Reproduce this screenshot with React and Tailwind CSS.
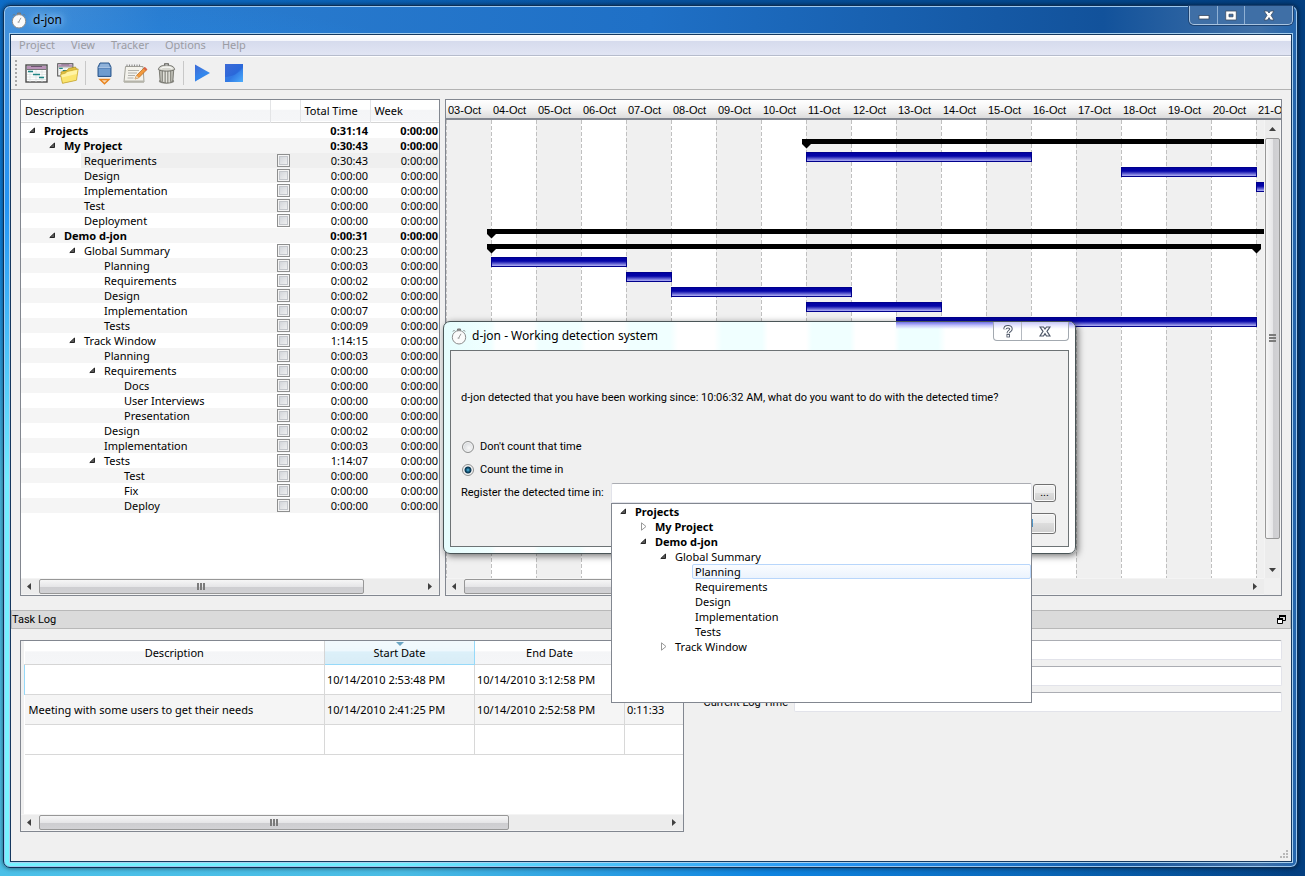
import React from "react";

const TASKS = [
  { name: "Projects", level: 0, open: true, bold: true, total: "0:31:14" },
  { name: "My Project", level: 1, open: true, bold: true, total: "0:30:43" },
  { name: "Requeriments", level: 2, check: true, total: "0:30:43", hover: true },
  { name: "Design", level: 2, check: true, total: "0:00:00" },
  { name: "Implementation", level: 2, check: true, total: "0:00:00" },
  { name: "Test", level: 2, check: true, total: "0:00:00" },
  { name: "Deployment", level: 2, check: true, total: "0:00:00" },
  { name: "Demo d-jon", level: 1, open: true, bold: true, total: "0:00:31" },
  { name: "Global Summary", level: 2, open: true, check: true, total: "0:00:23" },
  { name: "Planning", level: 3, check: true, total: "0:00:03" },
  { name: "Requirements", level: 3, check: true, total: "0:00:02" },
  { name: "Design", level: 3, check: true, total: "0:00:02" },
  { name: "Implementation", level: 3, check: true, total: "0:00:07" },
  { name: "Tests", level: 3, check: true, total: "0:00:09" },
  { name: "Track Window", level: 2, open: true, check: true, total: "1:14:15" },
  { name: "Planning", level: 3, check: true, total: "0:00:03" },
  { name: "Requirements", level: 3, open: true, check: true, total: "0:00:00" },
  { name: "Docs", level: 4, check: true, total: "0:00:00" },
  { name: "User Interviews", level: 4, check: true, total: "0:00:00" },
  { name: "Presentation", level: 4, check: true, total: "0:00:00" },
  { name: "Design", level: 3, check: true, total: "0:00:02" },
  { name: "Implementation", level: 3, check: true, total: "0:00:03" },
  { name: "Tests", level: 3, open: true, check: true, total: "1:14:07" },
  { name: "Test", level: 4, check: true, total: "0:00:00" },
  { name: "Fix", level: 4, check: true, total: "0:00:00" },
  { name: "Deploy", level: 4, check: true, total: "0:00:00" },
];

const PICKER = [
  { name: "Projects", level: 0, state: "open", bold: true },
  { name: "My Project", level: 1, state: "closed", bold: true },
  { name: "Demo d-jon", level: 1, state: "open", bold: true },
  { name: "Global Summary", level: 2, state: "open" },
  { name: "Planning", level: 3, selected: true },
  { name: "Requirements", level: 3 },
  { name: "Design", level: 3 },
  { name: "Implementation", level: 3 },
  { name: "Tests", level: 3 },
  { name: "Track Window", level: 2, state: "closed" },
];

const INDENT = ["pl-[8px]", "pl-[28px]", "pl-[48px]", "pl-[68px]", "pl-[88px]"];

const DAYS = Array.from({ length: 19 }, (_, i) => `${String(i + 3).padStart(2, "0")}-Oct`);
const DAY = 45;

/* row = line in the task tree, start = days after 03-Oct */
const BARS = [
  { row: 2, start: 8, days: 5 },
  { row: 3, start: 15, days: 3 },
  { row: 4, start: 18, days: 3 },
  { row: 9, start: 1, days: 3 },
  { row: 10, start: 4, days: 1 },
  { row: 11, start: 5, days: 4 },
  { row: 12, start: 8, days: 3 },
  { row: 13, start: 10, days: 8 },
];
const SUMMARIES = [
  { row: 1, start: 8, days: 14 },
  { row: 7, start: 1, days: 22 },
  { row: 8, start: 1, days: 17 },
];

const HEAD = "bg-[linear-gradient(#ffffff_0%,#ffffff_45%,#f4f5f7_46%,#f5f6f8_100%)]";

function Expander({ state }) {
  if (!state) return <span className="w-[15px] shrink-0" />;
  return (
    <button type="button" aria-label={state === "open" ? "Collapse" : "Expand"} className="flex h-[15px] w-[15px] shrink-0 items-center">
      <svg width="8" height="9" viewBox="0 0 8 9" aria-hidden="true">
        {state === "open" ? (
          <path d="M5.5 2v4.5H.8z" fill="#595959" stroke="#262626" strokeWidth="1" />
        ) : (
          <path d="M1.5.8v7.4L6 4.5z" fill="#fff" stroke="#989898" strokeWidth="1" />
        )}
      </svg>
    </button>
  );
}

function ArrowGlyph({ dir }) {
  const d = { left: "M6 1v7L2 4.500z", right: "M3 1v7l4-3.500z", up: "M1 6h7L4.500 2z", down: "M1 3h7L4.500 7z" }[dir];
  return (
    <svg width="9" height="9" viewBox="0 0 9 9" aria-hidden="true">
      <path d={d} fill="#404040" />
    </svg>
  );
}

function HScroll({ thumb }) {
  return (
    <div className="flex h-[17px] shrink-0 border-t border-b border-[#f4f4f4] bg-[#ececec]">
      <button type="button" aria-label="Scroll left" className="flex w-[18px] items-center pl-[4px]">
        <ArrowGlyph dir="left" />
      </button>
      <div className="flex flex-1">
        <div className={`${thumb} flex items-center justify-center gap-px rounded-[2px] border border-[#979797] bg-[linear-gradient(#f6f6f6_0%,#e6e6e8_50%,#cdcdd0_51%,#d2d2d5_100%)]`}>
          <span className="h-[7px] w-[2px] bg-[#7b7b7b]" />
          <span className="h-[7px] w-[2px] bg-[#7b7b7b]" />
          <span className="h-[7px] w-[2px] bg-[#7b7b7b]" />
        </div>
      </div>
      <button type="button" aria-label="Scroll right" className="flex w-[18px] items-center pl-[4px]">
        <ArrowGlyph dir="right" />
      </button>
    </div>
  );
}

function VScroll() {
  return (
    <div className="flex w-[17px] shrink-0 flex-col border-r border-l border-[#f4f4f4] bg-[#ececec]">
      <button type="button" aria-label="Scroll up" className="flex h-[18px] items-center justify-center">
        <ArrowGlyph dir="up" />
      </button>
      <div className="flex flex-1 flex-col">
        <div className="flex h-[95%] flex-col items-center justify-center gap-px rounded-[2px] border border-[#979797] bg-[linear-gradient(to_right,#f6f6f6_0%,#e6e6e8_50%,#cdcdd0_51%,#d2d2d5_100%)]">
          <span className="h-[2px] w-[7px] bg-[#7b7b7b]" />
          <span className="h-[2px] w-[7px] bg-[#7b7b7b]" />
          <span className="h-[2px] w-[7px] bg-[#7b7b7b]" />
        </div>
      </div>
      <button type="button" aria-label="Scroll down" className="flex h-[18px] items-center justify-center">
        <ArrowGlyph dir="down" />
      </button>
    </div>
  );
}

function Stopwatch() {
  return (
    <svg width="16" height="17" viewBox="0 0 16 17" aria-hidden="true">
      <path d="M6.500 1h3v2h-3zM2 3.500l1.500-1.500M14 3.500l-1.500-1.500" stroke="#777" strokeWidth="1" fill="#888" />
      <circle cx="8" cy="9.300" r="6.700" fill="#fbfbfb" stroke="#8c8c8c" strokeWidth="1" />
      <path d="M7.200 10.800L10 5.800" stroke="#9a9a9a" strokeWidth="1" />
      <circle cx="7.600" cy="10" r="1" fill="#b5b5b5" />
    </svg>
  );
}

function GanttWindow() {
  return (
    <g>
      <rect x="1" y="1" width="21" height="17" fill="#fdfdfd" stroke="#4a4a4a" strokeWidth="1.400" />
      <rect x="2" y="2" width="19" height="3" fill="#b993b8" />
      <path d="M6 2.500h11" stroke="#6e5570" />
      <path d="M2 5.500h19" stroke="#777" />
      <path d="M2 8h19M2 10.500h19M2 13h19M2 15.500h19M5 6v12M11 6v12M17 6v12" stroke="#d9e0e0" strokeWidth=".7" />
      <path d="M3 7.500h5M8 10.500h7M14 13.500h5" stroke="#1f8584" strokeWidth="1.600" />
    </g>
  );
}

function NewProjectIcon() {
  return (
    <svg width="23" height="19" viewBox="0 0 23 19" aria-hidden="true"><GanttWindow /></svg>
  );
}

function OpenProjectIcon() {
  return (
    <svg width="22" height="22" viewBox="0 0 22 22" aria-hidden="true">
      <g transform="translate(0 1) scale(.72)"><GanttWindow /></g>
      <path d="M4 10l6-1.500 1.500-2L18.500 5l.8 1.800 1.200.2-1.500 11-13.500 3z" fill="#e3c340" stroke="#a98a1c" strokeWidth=".7" />
      <path d="M3.500 12.500L8.500 11l1.200-1.500L21.200 7 19.500 18.300 5.500 21.300z" fill="#fbe56f" stroke="#c6a530" strokeWidth=".7" />
      <path d="M4.300 13L9 11.700l1.100-1.400L20.300 8l-.6 4L5 15.600z" fill="#fff3a6" />
    </svg>
  );
}

function DownloadIcon() {
  return (
    <svg width="15" height="23" viewBox="0 0 15 23" aria-hidden="true">
      <path d="M3 1h9l2 4V14.500H1V5z" fill="#5b87bd" stroke="#2f5a8e" strokeWidth="1" />
      <path d="M3.500 1.800h8L12.800 5H2.200z" fill="#8fb2da" />
      <path d="M1.500 5.500h12" stroke="#bcd3ec" strokeWidth=".8" />
      <rect x="2" y="7" width="11" height="6.500" fill="#6f9ccf" />
      <path d="M3 17.500h9L7.500 21.800z" fill="#f8d9b0" stroke="#e8821c" strokeWidth="1.400" />
    </svg>
  );
}

function EditIcon() {
  return (
    <svg width="25" height="21" viewBox="0 0 25 21" aria-hidden="true">
      <path d="M2.500 3.500h17.500l1 15.500h-20z" fill="#f3f2ec" stroke="#a2a198" strokeWidth="1" />
      <path d="M1 17.500h20v2H1z" fill="#b5b4aa" />
      <path d="M4 3.500V1.500M6.500 3.500V1.500M9 3.500V1.500M11.500 3.500V1.500M14 3.500V1.500M16.500 3.500V1.500" stroke="#8d8d8d" strokeWidth="1.100" />
      <path d="M5 7.500h11M5 10h9M5 12.500h7M4.500 15h6" stroke="#b0b0ac" strokeWidth="1" />
      <path d="M12 16l1.500-3.500 8-8 2.300 2.200-8 8z" fill="#f29a3d" stroke="#b8651a" strokeWidth=".7" />
      <path d="M12 16l1.500-3.500 2.300 2.200z" fill="#e9d5b5" />
      <path d="M20.500 5.500l1.500-1.500 2.300 2.200-1.500 1.500z" fill="#d9604a" />
    </svg>
  );
}

function TrashIcon() {
  return (
    <svg width="19" height="23" viewBox="0 0 21 24" aria-hidden="true">
      <ellipse cx="10.500" cy="20.500" rx="8.500" ry="2.700" fill="#8b8b84" />
      <path d="M2.500 8h16l-1 12.500c-3 2.300-11 2.300-14 0z" fill="#b9b9b1" stroke="#73736c" strokeWidth="1" />
      <path d="M6 9v12M9 9.500V22M12 9.500V22M15 9v12" stroke="#8a8a82" strokeWidth="1.100" />
      <path d="M7.400 9v12M10.500 9.500V22M13.500 9.500V22" stroke="#e6e6e0" strokeWidth="1.200" />
      <path d="M1.500 7.500C2 4 6 2.800 10.500 2.800S19 4 19.500 7.500c-3 2.500-15 2.500-18 0z" fill="#d9d9d2" stroke="#66665f" strokeWidth="1" />
      <path d="M4 6.500C6 4.500 14 4.500 17 6.500" stroke="#f8f8f5" strokeWidth="1.200" fill="none" />
      <path d="M8.500 3V1.300h4V3" stroke="#5c5c56" strokeWidth="1.200" fill="#ccc" />
    </svg>
  );
}

function PlayIcon() {
  return (
    <svg width="17" height="18" viewBox="0 0 17 18" aria-hidden="true">
      <defs><linearGradient id="play" x1="0" y1="0" x2="1" y2="1"><stop offset="0" stopColor="#3a6ad8" /><stop offset="1" stopColor="#3c9cf5" /></linearGradient></defs>
      <path d="M1 .5v17L16 9z" fill="url(#play)" />
      <path d="M1 17.500V12c4-3 9-4 14-3.500z" fill="#2f86ee" opacity=".6" />
    </svg>
  );
}

function StopIcon() {
  return (
    <svg width="18" height="18" viewBox="0 0 18 18" aria-hidden="true">
      <defs><linearGradient id="stop" x1="0" y1="0" x2="1" y2="1"><stop offset="0" stopColor="#3d6ad6" /><stop offset=".55" stopColor="#2a68da" /><stop offset="1" stopColor="#55b8ff" /></linearGradient></defs>
      <rect width="18" height="18" x="0" y="0" fill="url(#stop)" />
      <path d="M0 18V13C7 13 14 9 18 4v14z" fill="#3f9bf7" opacity=".35" />
    </svg>
  );
}

function ToolButton({ label, children, className }) {
  return (
    <button type="button" aria-label={label} className={`flex h-[26px] items-center justify-center ${className}`}>
      {children}
    </button>
  );
}

function TitleBar() {
  return (
    <header className="flex h-[28px] items-start justify-between">
      <div className="flex h-[28px] items-center gap-[6px] pl-px">
        <Stopwatch />
        <h1 className="text-[12px] leading-[16px] text-black [text-shadow:0_0_6px_#9fd0ff,0_0_10px_#9fd0ff,0_0_14px_#9fd0ff]">d-jon</h1>
      </div>
      <div className="flex h-[19px] overflow-hidden rounded-b-[5px] border border-t-0 border-[#a9c4e0] bg-[#3f6fa6] shadow-[0_0_0_1px_#1d4372]">
        <button type="button" aria-label="Minimize" className="flex w-[28px] items-center justify-center border-r border-[#8fb0d4]">
          <svg width="12" height="12" viewBox="0 0 12 12" aria-hidden="true"><rect x="1" y="6.500" width="10" height="3.500" fill="#fff" stroke="#3b4b62" strokeWidth=".8" /></svg>
        </button>
        <button type="button" aria-label="Maximize" className="flex w-[27px] items-center justify-center border-r border-[#8fb0d4]">
          <svg width="12" height="11" viewBox="0 0 12 11" aria-hidden="true"><path fillRule="evenodd" d="M.7 1h10.600v9H.7zM4 4.200v2.600h4V4.200z" fill="#fff" stroke="#3b4b62" strokeWidth=".8" /></svg>
        </button>
        <button type="button" aria-label="Close" className="flex w-[47px] items-center justify-center">
          <svg width="12" height="11" viewBox="0 0 12 11" aria-hidden="true"><path d="M1 1h3.500L6 3l1.500-2H11L8 5.300 11 10H7.500L6 7.600 4.500 10H1l3-4.700z" fill="#fff" stroke="#3b4b62" strokeWidth=".8" /></svg>
        </button>
      </div>
    </header>
  );
}

function TaskTree() {
  return (
    <section className="flex w-[420px] shrink-0 flex-col border border-[#828790] bg-white">
      <div className="flex-1">
        <table className="w-full table-fixed border-collapse text-[11px] leading-[15px]">
          <colgroup><col /><col className="w-[30px]" /><col className="w-[70px]" /><col className="w-[69px]" /></colgroup>
          <thead>
            <tr className={`h-[22px] border-b border-[#d5d5d5] text-left ${HEAD}`}>
              <th className="border-r border-[#e3e4e6] p-0 pl-[4px] font-normal">Description</th>
              <th aria-label="Done" className="border-r border-[#e3e4e6] p-0" />
              <th className="border-r border-[#e3e4e6] p-0 pl-[4px] font-normal">Total Time</th>
              <th className="p-0 pl-[4px] font-normal">Week</th>
            </tr>
            <tr aria-hidden="true" className="h-px"><td colSpan="4" className="p-0" /></tr>
          </thead>
          <tbody>
            {TASKS.map((t, i) => (
              <tr key={i} className={`h-[15px] ${t.hover ? "bg-[linear-gradient(to_right,#fff_60px,#efefef_60px)]" : i % 2 ? "bg-[#f5f5f5]" : ""} ${t.bold ? "font-bold" : ""}`}>
                <td className="p-0">
                  <div className={`flex h-[15px] items-center whitespace-nowrap ${INDENT[t.level]}`}>
                    <Expander state={t.open ? "open" : null} />
                    <span>{t.name}</span>
                  </div>
                </td>
                <td className="p-0">
                  <div className="flex h-[15px] items-center justify-center pr-[4px]">
                    {t.check && (
                      <input type="checkbox" aria-label={t.name} className="h-[13px] w-[13px] appearance-none border border-[#8e8f8f] bg-[linear-gradient(135deg,#cbcfd5,#f6f6f6)] shadow-[inset_0_0_0_1px_#f4f4f4,inset_0_0_0_2px_#c3c6cb]" />
                    )}
                  </div>
                </td>
                <td className="p-0 pr-[2px] text-right">{t.total}</td>
                <td className="p-0 pr-px text-right">0:00:00</td>
              </tr>
            ))}
          </tbody>
        </table>
      </div>
      <HScroll thumb="w-[85%]" />
    </section>
  );
}

function GanttChart() {
  return (
    <section className="flex min-w-0 flex-1 flex-col border border-[#828790] bg-white">
      <div className="flex h-[20px] shrink-0 overflow-hidden border-b-2 border-[#828790] bg-[linear-gradient(#ffffff,#f4f4f4_50%,#dcdcdc)] font-['Liberation_Sans',Arial,sans-serif] text-[11px] leading-[20px]">
        {DAYS.map((d) => (
          <span key={d} className="w-[45px] shrink-0 whitespace-nowrap pl-[2px]">{d}</span>
        ))}
      </div>
      <div className="flex min-h-0 flex-1">
        <div className="min-w-0 flex-1">
          <svg className="block h-full w-full" aria-label="Gantt chart">
            <defs>
              <linearGradient id="bar" x1="0" y1="0" x2="0" y2="1">
                <stop offset="0" stopColor="#0000a0" />
                <stop offset=".4" stopColor="#0404a8" />
                <stop offset="1" stopColor="#c4c4ff" />
              </linearGradient>
            </defs>
            {DAYS.map((d, i) => (
              <g key={d}>
                {i % 2 === 0 && <rect x={i * DAY} y="0" width={DAY} height="100%" fill="#f0f0f0" />}
                <line x1={i * DAY + 0.5} x2={i * DAY + 0.5} y1="0" y2="100%" stroke="#c0c0c0" strokeDasharray="4 2" />
              </g>
            ))}
            {SUMMARIES.map((s) => {
              const x = s.start * DAY;
              const y = s.row * 15 + 4;
              const end = x + s.days * DAY;
              return (
                <g key={s.row} fill="#000">
                  <rect x={x - 4} y={y} width={s.days * DAY + 9} height="5" />
                  <path d={`M${x - 4} ${y + 4}h9v1l-4.500 4.500l-4.500 -4.500z`} />
                  <path d={`M${end - 4} ${y + 4}h9v1l-4.500 4.500l-4.500 -4.500z`} />
                </g>
              );
            })}
            {BARS.map((b) => (
              <rect key={b.row} x={b.start * DAY + 0.5} y={b.row * 15 + 2.5} width={b.days * DAY} height="9" fill="url(#bar)" stroke="#00008c" />
            ))}
          </svg>
        </div>
        <VScroll />
      </div>
      <div className="flex bg-[#f0f0f0]">
        <div className="min-w-0 flex-1"><HScroll thumb="w-1/2" /></div>
        <div className="w-[17px]" />
      </div>
    </section>
  );
}

const LOG = [
  { text: "", start: "10/14/2010 2:53:48 PM", end: "10/14/2010 3:12:58 PM", time: "0:19:10" },
  { text: "Meeting with some users to get their needs", start: "10/14/2010 2:41:25 PM", end: "10/14/2010 2:52:58 PM", time: "0:11:33" },
  { text: "", start: "", end: "", time: "" },
];

function TaskLog() {
  return (
    <section className="flex h-[192px] w-[664px] shrink-0 flex-col border border-[#828790] bg-white">
      <div className="flex-1 border-l-[3px] border-[#f0f0f0]">
        <table className="w-full table-fixed border-collapse text-[11px] leading-[15px]">
          <colgroup><col className="w-[300px]" /><col className="w-[150px]" /><col className="w-[150px]" /><col /></colgroup>
          <thead>
            <tr className={`h-[23px] ${HEAD}`}>
              <th className="border-r border-b border-[#d5d5d5] p-0 font-normal">Description</th>
              <th className="relative border-r border-b border-[#96d9f9] bg-[linear-gradient(#f2f9fd_0%,#eef8fd_45%,#dcf0f9_46%,#d8ecf6_100%)] p-0 font-normal">
                Start Date
                <svg className="absolute top-[1px] left-1/2 -ml-[4px]" width="8" height="4" viewBox="0 0 8 4" aria-hidden="true"><path d="M0 0h8L4 4z" fill="#6aa5c4" /></svg>
              </th>
              <th className="border-r border-b border-[#d5d5d5] p-0 font-normal">End Date</th>
              <th aria-label="Time" className="border-b border-[#d5d5d5] p-0" />
            </tr>
          </thead>
          <tbody>
            {LOG.map((r, i) => (
              <tr key={i} className={`h-[30px] border-b border-[#d8d8d8] ${i === 1 ? "bg-[#f5f5f5]" : ""}`}>
                <td className={`border-r border-[#d8d8d8] p-0 pl-[4px] ${i === 0 ? "border-l border-l-[#96d9f9]" : ""}`}>{r.text}</td>
                <td className="border-r border-[#d8d8d8] p-0 pl-[2px]">{r.start}</td>
                <td className="border-r border-[#d8d8d8] p-0 pl-[2px]">{r.end}</td>
                <td className="p-0 pl-[2px]">{r.time}</td>
              </tr>
            ))}
          </tbody>
        </table>
      </div>
      <HScroll thumb="w-3/4" />
    </section>
  );
}

const FIELD = "h-[20px] min-w-0 flex-1 rounded-[2px] border border-[#e2e3ea] border-t-[#abadb3] bg-white px-[3px] text-[11px]";

function LogForm() {
  return (
    <form className="flex flex-1 flex-col gap-[6px] font-[Roboto,sans-serif] text-[11px] leading-[20px]">
      <div className="flex pl-[110px]"><input aria-label="Task" className={FIELD} /></div>
      <div className="flex pl-[110px]"><input aria-label="Time" className={FIELD} /></div>
      <div className="flex">
        <label htmlFor="log-time" className="w-[110px] pr-[6px] text-right leading-[21px]">Current Log Time</label>
        <input id="log-time" className={FIELD} />
      </div>
    </form>
  );
}

const RADIO =
  "h-[12px] w-[12px] appearance-none rounded-full border border-[#8e8f8f] bg-[radial-gradient(circle_at_60%_60%,#f8f8f8,#c9cdd2)] shadow-[inset_0_0_0_1px_#f4f4f4] checked:bg-[radial-gradient(circle,#59c1ec_0px,#12506e_2px,#0b3550_3px,#f0f0f0_4px)]";
const PUSH =
  "rounded-[3px] border border-[#707070] bg-[linear-gradient(#f2f2f2_0%,#ebebeb_49%,#dddddd_50%,#cfcfcf_100%)] shadow-[inset_0_0_0_1px_#fafafa]";

function TaskPicker() {
  return (
    <ul className="absolute top-[20px] left-0 z-10 h-[200px] w-full border border-[#828790] bg-white font-['Noto_Sans',sans-serif] text-[11px] leading-[15px]">
      {PICKER.map((p, i) => (
        <li key={i} className={`flex h-[15px] items-center ${INDENT[p.level]} ${p.bold ? "font-bold" : ""}`}>
          {p.selected ? (
            <span className="ml-[12px] flex-1 rounded-[2px] border border-[#b8d6fb] bg-[linear-gradient(#fafcff,#ebf3fd)] pl-[2px] leading-[13px]">{p.name}</span>
          ) : (
            <>
              <Expander state={p.state} />
              <span>{p.name}</span>
            </>
          )}
        </li>
      ))}
    </ul>
  );
}

function DetectionDialog() {
  return (
    <div role="dialog" aria-label="d-jon - Working detection system" className="absolute top-[321px] left-[443px] z-20 w-[633px] rounded-[7px] border border-[#4a5557] bg-[linear-gradient(to_right,#e6fdfd_0px,#f0ffff_47px,#fdffff_52px,#fdffff_90px,#f0ffff_95px,#f0ffff_135px,#fdffff_142px,#fdffff_180px,#f0ffff_186px,#f0ffff_226px,#ffffff_234px,#ffffff_270px,#f0ffff_278px,#f0ffff_318px,#ffffff_324px,#ffffff_362px,#f0ffff_368px,#f0ffff_406px,#ffffff_412px,#ffffff_450px,#eeffff_456px,#eeffff_494px,#ffffff_502px)] px-[6px] pb-[6px] shadow-[2px_2px_7px_rgba(0,0,0,0.55)]">
      <div className="pointer-events-none absolute top-0 right-0 left-[452px] h-[7px] rounded-tr-[6px] bg-[linear-gradient(#7070e8,#c4c4fa_50%,transparent)]" />
      <div className="relative flex h-[28px] items-start justify-between">
        <div className="flex h-[28px] items-center gap-[5px] pl-px">
          <Stopwatch />
          <h2 className="text-[12px] leading-[16px]">d-jon - Working detection system</h2>
        </div>
        <div className="flex h-[19px] overflow-hidden rounded-b-[4px] border border-t-0 border-[#a3a9b0] bg-white/60">
          <button type="button" aria-label="Help" className="flex w-[28px] items-center justify-center border-r border-[#b4b9c0]">
            <svg width="10" height="13" viewBox="0 0 10 13" aria-hidden="true">
              <path d="M2 4.200C2 .9 8 .9 8 4c0 2-2.800 2-2.800 4.300" fill="none" stroke="#4c5566" strokeWidth="3.400" />
              <rect x="3.500" y="9" width="3.400" height="3.400" fill="#4c5566" />
              <path d="M2 4C2 .9 8 .9 8 4c0 2-2.800 2-2.800 4" fill="none" stroke="#fff" strokeWidth="1.500" />
              <rect x="4.300" y="9.900" width="1.700" height="1.700" fill="#fff" />
            </svg>
          </button>
          <button type="button" aria-label="Close dialog" className="flex w-[46px] items-center justify-center">
            <svg width="12" height="11" viewBox="0 0 12 11" aria-hidden="true"><path d="M1 1h3.500L6 3l1.500-2H11L8 5.300 11 10H7.500L6 7.600 4.500 10H1l3-4.700z" fill="#fff" stroke="#4c5566" strokeWidth="1.200" /></svg>
          </button>
        </div>
      </div>
      <div className="relative border border-[#6d7375] bg-[#f0f0f0] px-[10px] pb-[12px] font-[Roboto,sans-serif] text-[11px] leading-[16px]">
        <p className="pt-[39px] pb-[33px]">d-jon detected that you have been working since: 10:06:32 AM, what do you want to do with the detected time?</p>
        <fieldset className="flex flex-col gap-[7px] pl-px">
          <label className="flex items-center gap-[6px]"><input type="radio" name="count" className={RADIO} />Don't count that time</label>
          <label className="flex items-center gap-[6px]"><input type="radio" name="count" defaultChecked className={RADIO} />Count the time in</label>
        </fieldset>
        <div className="mt-[5px] flex items-center pr-[2px]">
          <label htmlFor="register" className="w-[150px] shrink-0">Register the detected time in:</label>
          <div className="relative flex min-w-0 flex-1">
            <input id="register" className={FIELD} />
            <TaskPicker />
          </div>
          <button type="button" aria-label="Browse" className={`ml-px h-[18px] w-[23px] leading-[16px] ${PUSH}`}>...</button>
        </div>
        <div className="mt-[10px] flex justify-end pr-[2px]">
          <button type="button" className={`h-[21px] w-[79px] ${PUSH}`}>Cancel</button>
        </div>
      </div>
    </div>
  );
}

export default function App() {
  return (
    <div className="relative flex min-h-screen flex-col bg-[radial-gradient(100%_100%_at_0%_88%,#4cc2ea_0%,#4abce4_33%,#0f84e0_60%,rgba(4,72,150,0)_100%),linear-gradient(to_right,#0d62bc,#04498f_80%,#033f80)] pt-[5px] pr-[7px] pb-[8px] pl-[3px] font-['Noto_Sans',sans-serif] text-black">
      <div className="flex flex-1 flex-col rounded-[7px] border border-[#0d2f55] bg-[radial-gradient(100%_100%_at_0%_88%,#78f4ff_0%,#70ecff_33%,#2494f4_65%,rgba(30,110,200,0)_90%),linear-gradient(to_right,#4a90d6_0%,#2a7ccf_12%,#1f70c6_50%,#12529b_85%,#3f6fa6_97%,#2466ad_100%)] pr-[4px] pb-[5px] pl-[6px] shadow-[inset_0_0_0_1px_#9cc8f0,0_0_5px_rgba(0,0,0,0.6)]">
        <TitleBar />
        <main className="mr-px flex flex-1 flex-col border border-[#15385f] bg-[#f0f0f0] shadow-[0_0_0_1px_#a8d0ee]">
          <nav className="flex h-[21px] items-center gap-[16px] border-b border-[#b6bccc] bg-[linear-gradient(#ffffff_0%,#f3f5fb_30%,#d6dbed_31%,#e1e5f4_100%)] pl-[8px] text-[11px] leading-[16px] text-[#9b9ca3]">
            {["Project", "View", "Tracker", "Options", "Help"].map((m) => (
              <button key={m} type="button">{m}</button>
            ))}
          </nav>
          <div className="flex h-[34px] items-center border-t border-b border-t-white border-b-[#b3b3b3] pl-[4px]">
            <span className="h-[26px] w-[2px] bg-[repeating-linear-gradient(#a8a8a8_0px,#a8a8a8_2px,transparent_2px,transparent_4px)]" />
            <ToolButton label="New project" className="ml-[4px] w-[30px]"><NewProjectIcon /></ToolButton>
            <ToolButton label="Open project" className="w-[34px]"><OpenProjectIcon /></ToolButton>
            <span className="h-[24px] w-px bg-[#c8c8c8]" />
            <ToolButton label="Import" className="ml-[3px] w-[30px]"><DownloadIcon /></ToolButton>
            <ToolButton label="Edit task" className="w-[32px]"><EditIcon /></ToolButton>
            <ToolButton label="Delete" className="w-[31px]"><TrashIcon /></ToolButton>
            <span className="ml-px h-[24px] w-px bg-[#c8c8c8]" />
            <ToolButton label="Start" className="ml-[2px] w-[32px]"><PlayIcon /></ToolButton>
            <ToolButton label="Stop" className="w-[32px]"><StopIcon /></ToolButton>
          </div>
          <div className="flex flex-1 gap-[5px] px-[9px] pt-[9px] pb-[14px]">
            <TaskTree />
            <GanttChart />
          </div>
          <div className="flex h-[19px] items-center justify-between border border-[#b8b8b8] bg-[#dadada] pr-[4px] font-[Roboto,sans-serif] text-[11px] leading-[16px]">
            <h2 className="pt-px">Task Log</h2>
            <button type="button" aria-label="Float panel">
              <svg width="9" height="9" viewBox="0 0 9 9" aria-hidden="true">
                <path d="M2.500 3V.5h6v5H6" fill="none" stroke="#000" /><path d="M2 1h7" stroke="#000" strokeWidth="2" />
                <path d="M.5 3.500h5v5h-5z" fill="#fff" stroke="#000" /><path d="M0 4h6" stroke="#000" strokeWidth="2" />
              </svg>
            </button>
          </div>
          <div className="flex px-[9px] pt-[11px] pb-[3px]">
            <TaskLog />
            <LogForm />
          </div>
          <div className="flex h-[26px] items-end justify-end p-[2px]">
            <svg width="9" height="9" viewBox="0 0 9 9" fill="#b8b8b8" aria-hidden="true">
              <path d="M6 0h2v2H6zM3 3h2v2H3zM6 3h2v2H6zM0 6h2v2H0zM3 6h2v2H3zM6 6h2v2H6z" />
            </svg>
          </div>
        </main>
      </div>
      <DetectionDialog />
    </div>
  );
}
